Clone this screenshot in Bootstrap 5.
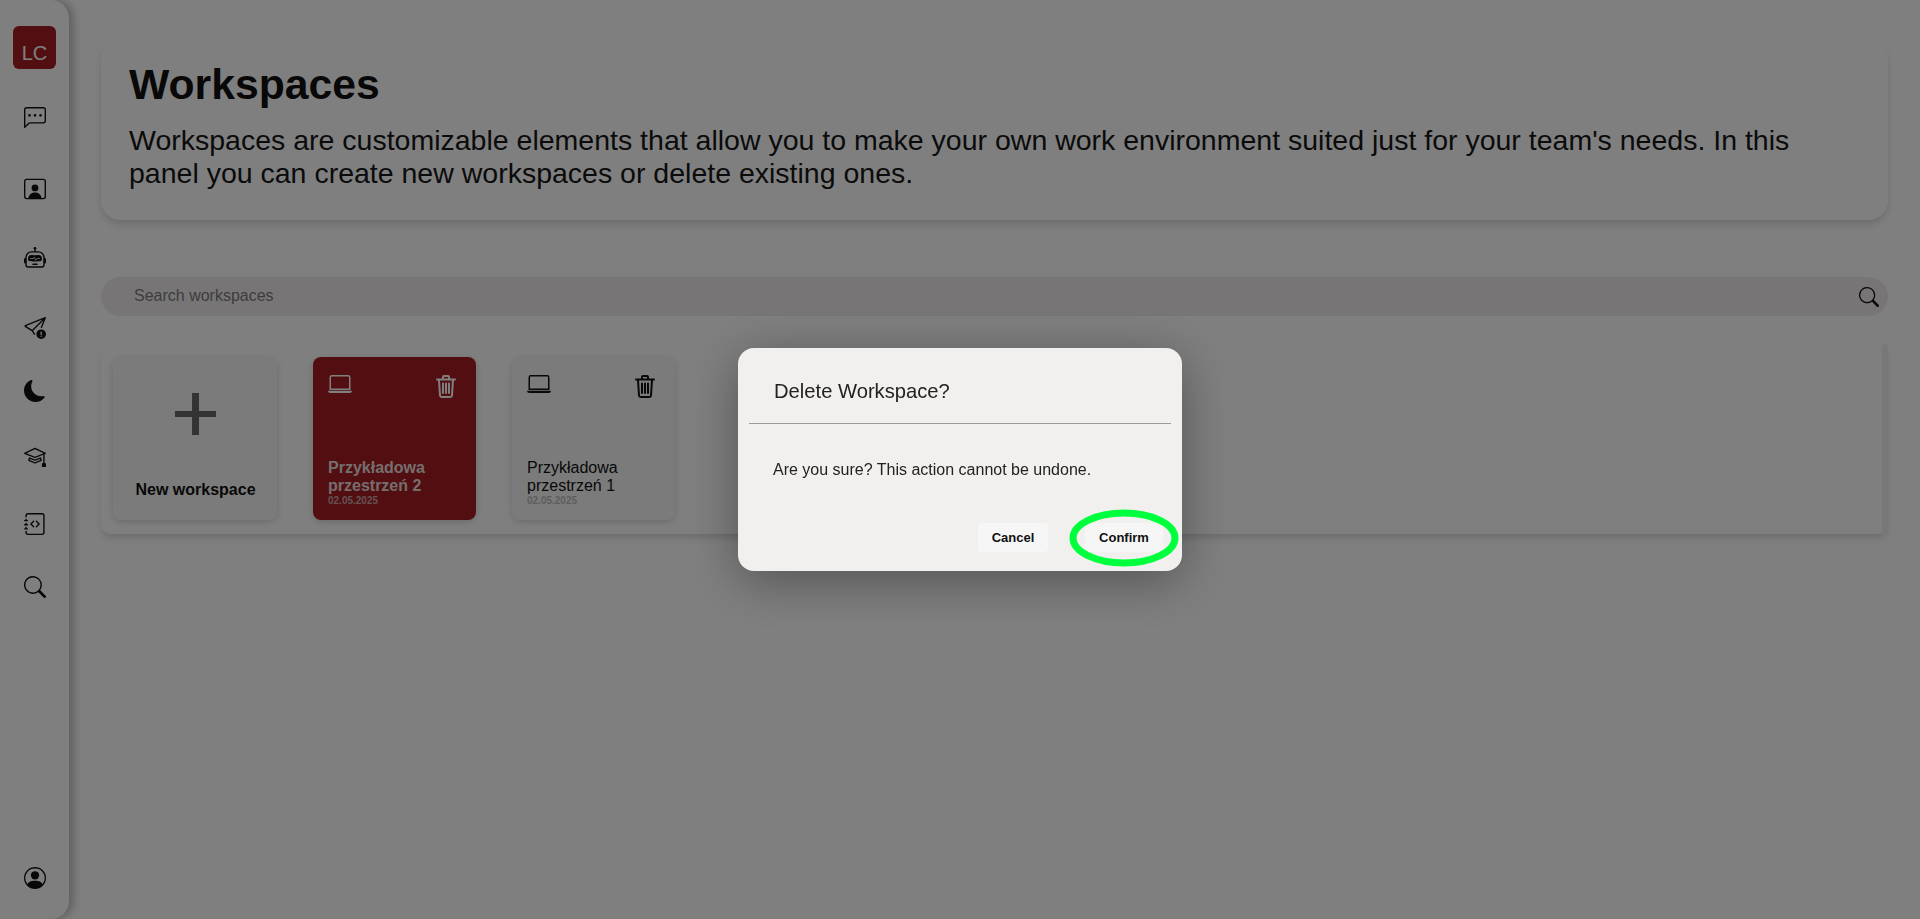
<!DOCTYPE html>
<html lang="en">
<head>
<meta charset="utf-8">
<title>Workspaces</title>
<link rel="stylesheet" href="https://cdn.jsdelivr.net/npm/bootstrap@5.3.0/dist/css/bootstrap.min.css">
<style>
html,body{height:100%;}
body{font-family:"Liberation Sans",Arial,sans-serif;background:#fff;color:#111;overflow:hidden;}
.side-rail{width:69px;height:919px;background:#fefefe;border-radius:0 18px 18px 0;box-shadow:4px 0 10px rgba(0,0,0,.28);flex:none;}
.logo-tile{width:43px;height:43px;margin-top:26px;background:#a51d22;color:#fff;border-radius:6px;font-size:20px;line-height:1;padding-top:17px;text-align:center;}
.rail-ico{width:22px;height:22px;display:block;fill:#111;}
.m38{margin-top:38px}.m49{margin-top:49px}.m47{margin-top:47px}.m48{margin-top:48px}.m41{margin-top:41px}.m43{margin-top:43px}.m46{margin-top:46px}
.rail-foot{margin-bottom:30px;}
.work-area{width:1787px;margin-left:32px;}
.intro-box{height:180px;margin-top:40px;padding:20px 32px 20px 28px;border-radius:20px;background:#fff;box-shadow:0 5px 10px -1px rgba(0,0,0,.16);}
.intro-box h1{font-size:42.7px;font-weight:700;line-height:48px;margin:0 0 16px;color:#111;}
.intro-box p{font-size:28.5px;line-height:33px;margin:0;color:#161616;}
.find-bar{height:39px;margin-top:57px;background:#f0ebed;border-radius:20px;padding:0 9px 2px 33px;}
.find-bar input{background:transparent;border:0;outline:0;flex:1;font-size:16px;padding:0;color:#222;}
.find-bar input::placeholder{color:#7b7b7b;opacity:1;}
.find-ico{width:20px;height:20px;fill:#111;margin-top:2px;}
.shelf{height:190px;margin-top:28px;padding:13px 0 0 12px;border-radius:10px;background:#fff;box-shadow:0 5px 8px -2px rgba(0,0,0,.18);gap:36px;position:relative;}
.shelf-track{position:absolute;top:0;right:0;bottom:0;width:6px;background:#f1f1f1;border-radius:4px;}
.tile{width:163px;height:163px;border-radius:8px;background:#f7f7f7;box-shadow:0 2px 7px rgba(0,0,0,.16);padding:15px;position:relative;flex:none;}
.tile-on{background:#a51d22;color:#fff;}
.tile-new{width:164px;padding:36px 0 0;text-align:center;}
.tile-new svg{width:41px;height:42px;fill:#666;display:block;margin:0 auto;}
.tile-new b{display:block;margin-top:46px;padding-left:1px;font-size:16px;line-height:18px;color:#111;}
.tile-top{height:81px;}
.ico-lap{width:24px;height:24px;fill:currentColor;}
.ico-bin{width:20px;height:23px;margin:3px 5px 0 0;fill:none;stroke:currentColor;stroke-width:2;stroke-linecap:round;}
.tile-name{font-size:16px;line-height:18px;margin-top:0;padding-top:6px;}
.tile-date{font-size:10px;line-height:10px;font-weight:700;color:#bbb;margin-top:1px;}
.tile-on .tile-date{color:#c9a5a6;}
.tile-on .tile-name{font-weight:700;color:#e9dcdc;}
.confirm-box{width:444px;}
.modal-dialog.confirm-box{max-width:444px;}
.modal-content.confirm-sheet{height:223px;border:0;border-radius:16px;background:#f1f0ee;box-shadow:0 10px 50px rgba(0,0,0,.35);position:relative;color:#222;}
.confirm-head{margin:0 11px;height:76px;padding:25px 25px 0;border-bottom:1px solid #9c9c9c;}
.confirm-head h2{font-size:20.2px;font-weight:400;line-height:36px;margin:0;}
.confirm-text{font-size:16px;line-height:20px;padding:36px 36px 0 35px;margin:0;}
.confirm-foot{position:absolute;left:0;right:0;bottom:19px;padding-right:19px;gap:37px;}
.act-btn{height:29px;padding:0;font-size:13px;font-weight:700;color:#111;background:#f6f6f6;border:0;border-radius:4px;}
.act-w1{width:70px}.act-w2{width:78px}
.mark-ring{position:absolute;left:331px;top:161px;width:110px;height:58px;fill:none;stroke:#00ff3c;stroke-width:7;pointer-events:none;}
</style>
</head>
<body>
<div class="d-flex">
  <nav class="side-rail d-flex flex-column align-items-center">
    <div class="logo-tile">LC</div>
    <svg class="rail-ico m38" viewBox="0 0 16 16"><path d="M14 1a1 1 0 0 1 1 1v8a1 1 0 0 1-1 1H4.414A2 2 0 0 0 3 11.586l-2 2V2a1 1 0 0 1 1-1zM2 0a2 2 0 0 0-2 2v12.793a.5.5 0 0 0 .854.353l2.853-2.853A1 1 0 0 1 4.414 12H14a2 2 0 0 0 2-2V2a2 2 0 0 0-2-2z"/><path d="M5 6a1 1 0 1 1-2 0 1 1 0 0 1 2 0m4 0a1 1 0 1 1-2 0 1 1 0 0 1 2 0m4 0a1 1 0 1 1-2 0 1 1 0 0 1 2 0"/></svg>
    <svg class="rail-ico m49" viewBox="0 0 16 16"><circle cx="8" cy="7.2" r="2.5"/><path d="M2 .5a2 2 0 0 0-2 2v11a2 2 0 0 0 2 2h12a2 2 0 0 0 2-2v-11a2 2 0 0 0-2-2zm10.8 14c-.45-2-1.76-4-4.8-4s-4.35 2-4.8 4H2a1 1 0 0 1-1-1v-11a1 1 0 0 1 1-1h12a1 1 0 0 1 1 1v11a1 1 0 0 1-1 1z"/></svg>
    <svg class="rail-ico m47" viewBox="0 0 16 16"><path d="M6 12.5a.5.5 0 0 1 .5-.5h3a.5.5 0 0 1 0 1h-3a.5.5 0 0 1-.5-.5M3 8.062C3 6.76 4.235 5.765 5.53 5.886a26.6 26.6 0 0 0 4.94 0C11.765 5.765 13 6.76 13 8.062v1.157a.93.93 0 0 1-.765.935c-.845.147-2.34.346-4.235.346s-3.39-.2-4.235-.346A.93.93 0 0 1 3 9.219zm4.542-.827a.25.25 0 0 0-.217.068l-.92.9a25 25 0 0 1-1.871-.183.25.25 0 0 0-.068.495c.55.076 1.232.149 2.02.193a.25.25 0 0 0 .189-.071l.754-.736.847 1.71a.25.25 0 0 0 .404.062l.932-.97a25 25 0 0 0 1.922-.188.25.25 0 0 0-.068-.495c-.538.074-1.207.145-1.98.189a.25.25 0 0 0-.166.076l-.754.785-.842-1.7a.25.25 0 0 0-.182-.135"/><path d="M8.5 1.866a1 1 0 1 0-1 0V3h-2A4.5 4.5 0 0 0 1 7.5V8a1 1 0 0 0-1 1v2a1 1 0 0 0 1 1v1a2 2 0 0 0 2 2h10a2 2 0 0 0 2-2v-1a1 1 0 0 0 1-1V9a1 1 0 0 0-1-1v-.5A4.5 4.5 0 0 0 10.5 3h-2zM14 7.5V13a1 1 0 0 1-1 1H3a1 1 0 0 1-1-1V7.5A3.5 3.5 0 0 1 5.5 4h5A3.5 3.5 0 0 1 14 7.5"/></svg>
    <svg class="rail-ico m48" viewBox="0 0 16 16"><path d="M15.964.686a.5.5 0 0 0-.65-.65L.767 5.855a.75.75 0 0 0-.124 1.329l4.995 3.178 1.531 2.406a.5.5 0 0 0 .844-.536L6.637 10.07l7.494-7.494-1.895 4.738a.5.5 0 1 0 .928.372zm-2.54 1.183L5.93 9.363 1.591 6.602z"/><path d="M12.5 16a3.5 3.5 0 1 0 0-7 3.5 3.5 0 0 0 0 7m.5-5v1.5a.5.5 0 0 1-1 0V11a.5.5 0 0 1 1 0m0 3a.5.5 0 1 1-1 0 .5.5 0 0 1 1 0"/></svg>
    <svg class="rail-ico m41" viewBox="0 0 16 16"><path d="M6 .278a.77.77 0 0 1 .08.858 7.2 7.2 0 0 0-.878 3.46c0 4.021 3.278 7.277 7.318 7.277q.792-.001 1.533-.16a.79.79 0 0 1 .81.316.73.73 0 0 1-.031.893A8.35 8.35 0 0 1 8.344 16C3.734 16 0 12.286 0 7.71 0 4.266 2.114 1.312 5.124.06A.75.75 0 0 1 6 .278"/></svg>
    <svg class="rail-ico m43" viewBox="0 0 16 16"><path d="M8.211 2.047a.5.5 0 0 0-.422 0l-7.5 3.5a.5.5 0 0 0 .025.917l7.5 3a.5.5 0 0 0 .372 0L14 7.14V13a1 1 0 0 0-1 1v2h3v-2a1 1 0 0 0-1-1V6.739l.686-.275a.5.5 0 0 0 .025-.917zM8 8.46 1.758 5.965 8 3.052l6.242 2.913z"/><path d="M4.176 9.032a.5.5 0 0 0-.656.327l-.5 1.7a.5.5 0 0 0 .294.605l4.5 1.8a.5.5 0 0 0 .372 0l4.5-1.8a.5.5 0 0 0 .294-.605l-.5-1.7a.5.5 0 0 0-.656-.327L8 10.466zm-.068 1.873.22-.748 3.496 1.311a.5.5 0 0 0 .352 0l3.496-1.311.22.748L8 12.46z"/></svg>
    <svg class="rail-ico m46" viewBox="0 0 16 16"><path fill-rule="evenodd" d="M8.646 5.646a.5.5 0 0 1 .708 0l2 2a.5.5 0 0 1 0 .708l-2 2a.5.5 0 0 1-.708-.708L10.293 8 8.646 6.354a.5.5 0 0 1 0-.708m-1.292 0a.5.5 0 0 0-.708 0l-2 2a.5.5 0 0 0 0 .708l2 2a.5.5 0 0 0 .708-.708L5.707 8l1.647-1.646a.5.5 0 0 0 0-.708"/><path d="M3 0h10a2 2 0 0 1 2 2v12a2 2 0 0 1-2 2H3a2 2 0 0 1-2-2v-1h1v1a1 1 0 0 0 1 1h10a1 1 0 0 0 1-1V2a1 1 0 0 0-1-1H3a1 1 0 0 0-1 1v1H1V2a2 2 0 0 1 2-2"/><path d="M1 5v-.5a.5.5 0 0 1 1 0V5h.5a.5.5 0 0 1 0 1h-2a.5.5 0 0 1 0-1zm0 3v-.5a.5.5 0 0 1 1 0V8h.5a.5.5 0 0 1 0 1h-2a.5.5 0 0 1 0-1zm0 3v-.5a.5.5 0 0 1 1 0v.5h.5a.5.5 0 0 1 0 1h-2a.5.5 0 0 1 0-1z"/></svg>
    <svg class="rail-ico m41" viewBox="0 0 16 16"><path d="M11.742 10.344a6.5 6.5 0 1 0-1.397 1.398h-.001q.044.06.098.115l3.85 3.85a1 1 0 0 0 1.415-1.414l-3.85-3.85a1 1 0 0 0-.115-.1zM12 6.5a5.5 5.5 0 1 1-11 0 5.5 5.5 0 0 1 11 0"/></svg>
    <svg class="rail-ico rail-foot mt-auto" viewBox="0 0 16 16"><path d="M11 6a3 3 0 1 1-6 0 3 3 0 0 1 6 0"/><path fill-rule="evenodd" d="M0 8a8 8 0 1 1 16 0A8 8 0 0 1 0 8m8-7a7 7 0 0 0-5.468 11.37C3.242 11.226 4.805 10 8 10s4.757 1.225 5.468 2.37A7 7 0 0 0 8 1"/></svg>
  </nav>

  <main class="work-area">
    <section class="intro-box">
      <h1>Workspaces</h1>
      <p>Workspaces are customizable elements that allow you to make your own work environment suited just for your team's needs. In this panel you can create new workspaces or delete existing ones.</p>
    </section>
    <div class="find-bar d-flex align-items-center">
      <input type="text" placeholder="Search workspaces">
      <svg class="find-ico" viewBox="0 0 16 16"><path d="M11.742 10.344a6.5 6.5 0 1 0-1.397 1.398h-.001q.044.06.098.115l3.85 3.85a1 1 0 0 0 1.415-1.414l-3.85-3.85a1 1 0 0 0-.115-.1zM12 6.5a5.5 5.5 0 1 1-11 0 5.5 5.5 0 0 1 11 0"/></svg>
    </div>
    <section class="shelf d-flex align-items-start">
      <div class="tile tile-new">
        <svg viewBox="0 0 41 42"><rect x="17" width="7" height="42"/><rect y="18" width="41" height="6"/></svg>
        <b>New workspace</b>
      </div>
      <div class="tile tile-on">
        <div class="tile-top d-flex justify-content-between align-items-start">
          <svg class="ico-lap" viewBox="0 0 16 16"><path d="M13.5 3a.5.5 0 0 1 .5.5V11H2V3.5a.5.5 0 0 1 .5-.5zm-11-1A1.5 1.5 0 0 0 1 3.5V12h14V3.5A1.5 1.5 0 0 0 13.5 2zM0 12.5h16a1.5 1.5 0 0 1-1.5 1.5h-13A1.5 1.5 0 0 1 0 12.5"/></svg>
          <svg class="ico-bin" viewBox="0 0 20 23"><path d="M1 4.500h18M7 4V2a1 1 0 0 1 1-1h4a1 1 0 0 1 1 1v2M3 5l1 15.500a1.600 1.600 0 0 0 1.600 1.500h8.800a1.600 1.600 0 0 0 1.600-1.500L17 5M7 8.500v9.500M10 8.500v9.500M13 8.500v9.500"/></svg>
        </div>
        <div class="tile-name">Przykładowa przestrzeń 2</div>
        <div class="tile-date">02.05.2025</div>
      </div>
      <div class="tile">
        <div class="tile-top d-flex justify-content-between align-items-start">
          <svg class="ico-lap" viewBox="0 0 16 16"><path d="M13.5 3a.5.5 0 0 1 .5.5V11H2V3.5a.5.5 0 0 1 .5-.5zm-11-1A1.5 1.5 0 0 0 1 3.5V12h14V3.5A1.5 1.5 0 0 0 13.5 2zM0 12.5h16a1.5 1.5 0 0 1-1.5 1.5h-13A1.5 1.5 0 0 1 0 12.5"/></svg>
          <svg class="ico-bin" viewBox="0 0 20 23"><path d="M1 4.500h18M7 4V2a1 1 0 0 1 1-1h4a1 1 0 0 1 1 1v2M3 5l1 15.500a1.600 1.600 0 0 0 1.600 1.500h8.800a1.600 1.600 0 0 0 1.600-1.500L17 5M7 8.500v9.500M10 8.500v9.500M13 8.500v9.500"/></svg>
        </div>
        <div class="tile-name">Przykładowa przestrzeń 1</div>
        <div class="tile-date">02.05.2025</div>
      </div>
      <div class="shelf-track"></div>
    </section>
  </main>
</div>

<div class="modal-backdrop show"></div>
<div class="modal d-block" tabindex="-1">
  <div class="modal-dialog modal-dialog-centered confirm-box">
    <div class="modal-content confirm-sheet">
      <div class="confirm-head"><h2>Delete Workspace?</h2></div>
      <p class="confirm-text">Are you sure? This action cannot be undone.</p>
      <div class="confirm-foot d-flex justify-content-end">
        <button class="btn act-btn act-w1" type="button">Cancel</button>
        <button class="btn act-btn act-w2" type="button">Confirm</button>
      </div>
      <svg class="mark-ring" viewBox="0 0 110 58"><ellipse cx="55" cy="29" rx="51" ry="25"/></svg>
    </div>
  </div>
</div>
<script src="https://cdn.jsdelivr.net/npm/bootstrap@5.3.0/dist/js/bootstrap.bundle.min.js"></script>
</body>
</html>
